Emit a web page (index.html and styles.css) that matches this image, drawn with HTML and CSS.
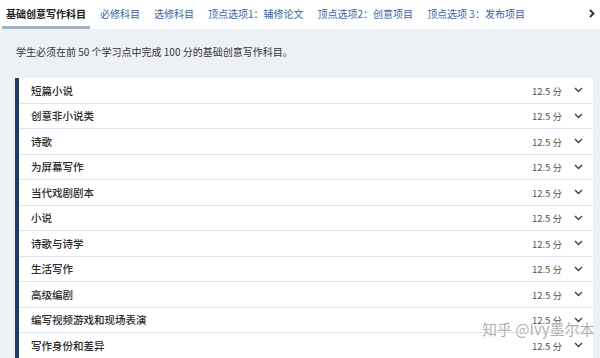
FILE: index.html
```html
<!DOCTYPE html>
<html lang="zh-CN">
<head>
    <meta charset="UTF-8">
    <meta name="viewport" content="width=device-width, initial-scale=1.0">
    <title>基础创意写作科目</title>
    <link rel="stylesheet" href="styles.css">
</head>
<body>
    <div class="tabs">
        <span class="tab active">基础创意写作科目</span>
        <span class="tab">必修科目</span>
        <span class="tab">选修科目</span>
        <span class="tab">顶点选项1：辅修论文</span>
        <span class="tab">顶点选项2：创意项目</span>
        <span class="tab">顶点选项 3：发布项目</span>
        <span class="tab-next">
            <svg width="6" height="9" viewBox="0 0 6 9"><path d="M1 1 L4.5 4.5 L1 8" fill="none" stroke="#1d3358" stroke-width="1.8"/></svg>
        </span>
    </div>
    <div class="panel">
        <p class="intro">学生必须在前 50 个学习点中完成 100 分的基础创意写作科目。</p>
        <div class="list">
            <div class="row"><span class="title">短篇小说</span><span class="score">12.5 分</span><svg class="chev" width="9" height="6" viewBox="0 0 9 6"><path d="M1 1 L4.5 4.5 L8 1" fill="none" stroke="#3a3f48" stroke-width="1.4"/></svg></div>
            <div class="row"><span class="title">创意非小说类</span><span class="score">12.5 分</span><svg class="chev" width="9" height="6" viewBox="0 0 9 6"><path d="M1 1 L4.5 4.5 L8 1" fill="none" stroke="#3a3f48" stroke-width="1.4"/></svg></div>
            <div class="row"><span class="title">诗歌</span><span class="score">12.5 分</span><svg class="chev" width="9" height="6" viewBox="0 0 9 6"><path d="M1 1 L4.5 4.5 L8 1" fill="none" stroke="#3a3f48" stroke-width="1.4"/></svg></div>
            <div class="row"><span class="title">为屏幕写作</span><span class="score">12.5 分</span><svg class="chev" width="9" height="6" viewBox="0 0 9 6"><path d="M1 1 L4.5 4.5 L8 1" fill="none" stroke="#3a3f48" stroke-width="1.4"/></svg></div>
            <div class="row"><span class="title">当代戏剧剧本</span><span class="score">12.5 分</span><svg class="chev" width="9" height="6" viewBox="0 0 9 6"><path d="M1 1 L4.5 4.5 L8 1" fill="none" stroke="#3a3f48" stroke-width="1.4"/></svg></div>
            <div class="row"><span class="title">小说</span><span class="score">12.5 分</span><svg class="chev" width="9" height="6" viewBox="0 0 9 6"><path d="M1 1 L4.5 4.5 L8 1" fill="none" stroke="#3a3f48" stroke-width="1.4"/></svg></div>
            <div class="row"><span class="title">诗歌与诗学</span><span class="score">12.5 分</span><svg class="chev" width="9" height="6" viewBox="0 0 9 6"><path d="M1 1 L4.5 4.5 L8 1" fill="none" stroke="#3a3f48" stroke-width="1.4"/></svg></div>
            <div class="row"><span class="title">生活写作</span><span class="score">12.5 分</span><svg class="chev" width="9" height="6" viewBox="0 0 9 6"><path d="M1 1 L4.5 4.5 L8 1" fill="none" stroke="#3a3f48" stroke-width="1.4"/></svg></div>
            <div class="row"><span class="title">高级编剧</span><span class="score">12.5 分</span><svg class="chev" width="9" height="6" viewBox="0 0 9 6"><path d="M1 1 L4.5 4.5 L8 1" fill="none" stroke="#3a3f48" stroke-width="1.4"/></svg></div>
            <div class="row"><span class="title">编写视频游戏和现场表演</span><span class="score">12.5 分</span><svg class="chev" width="9" height="6" viewBox="0 0 9 6"><path d="M1 1 L4.5 4.5 L8 1" fill="none" stroke="#3a3f48" stroke-width="1.4"/></svg></div>
            <div class="row"><span class="title">写作身份和差异</span><span class="score">12.5 分</span><svg class="chev" width="9" height="6" viewBox="0 0 9 6"><path d="M1 1 L4.5 4.5 L8 1" fill="none" stroke="#3a3f48" stroke-width="1.4"/></svg></div>
        </div>
    </div>
    <div class="watermark">知乎 @Ivy墨尔本</div>
</body>
</html>
```

FILE: styles.css
```css
body {
    margin: 0;
    width: 600px;
    height: 358px;
    overflow: hidden;
    position: relative;
    font-family: "Noto Sans CJK SC", "Noto Sans", sans-serif;
    background-color: #edf1f5;
}

.tabs {
    display: flex;
    align-items: stretch;
    height: 29px;
    padding-left: 2px;
    gap: 6px;
    background-color: #ffffff;
}

.tab {
    display: flex;
    align-items: center;
    padding: 0 4px;
    font-size: 10px;
    color: #3564a6;
    border-bottom: 3px solid transparent;
    box-sizing: border-box;
}

.tab.active {
    color: #222222;
    font-weight: 700;
    border-bottom-color: #a7b1c3;
}

.tab-next {
    margin-left: auto;
    display: flex;
    align-items: center;
    padding-right: 5px;
    padding-bottom: 2px;
}

.panel {
    padding: 15px 7px 0 15px;
}

.intro {
    margin: 0 0 18px 1px;
    font-size: 10px;
    line-height: 16px;
    color: #333333;
}

.list {
    background-color: #ffffff;
    border-left: 4px solid #1d3d70;
}

.row {
    display: flex;
    align-items: center;
    height: 24.5px;
    border-bottom: 1px solid #d9e2ed;
    padding: 0 10px 0 12px;
}

.title {
    flex: 1;
    font-size: 10.5px;
    font-weight: 500;
    color: #2b2b2b;
}

.score {
    font-size: 9.5px;
    color: #555555;
    margin-right: 12px;
    padding-top: 1px;
}

.watermark {
    position: absolute;
    left: 482px;
    top: 318px;
    font-size: 15px;
    color: rgba(130, 130, 130, 0.65);
    text-shadow: 0 0 2px #ffffff, 0 0 1px #ffffff;
    white-space: nowrap;
}
```
